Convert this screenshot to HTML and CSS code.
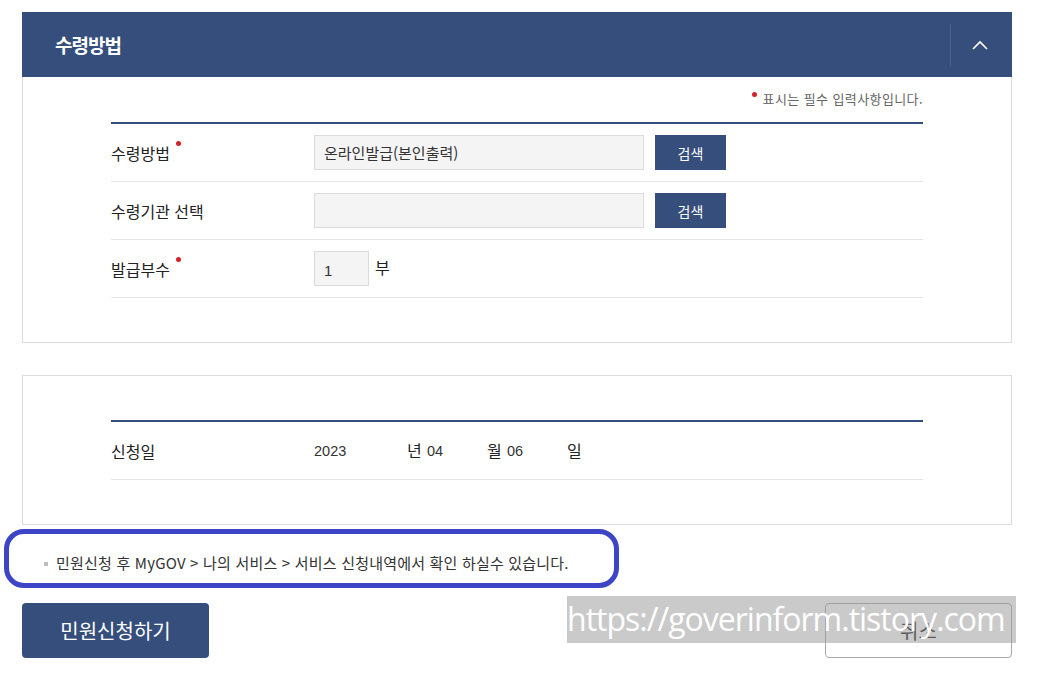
FILE: index.html
```html
<!DOCTYPE html>
<html lang="ko">
<head>
    <meta charset="UTF-8">
    <meta name="viewport" content="width=device-width, initial-scale=1.0">
    <title>민원신청 - 수령방법</title>
    <link rel="stylesheet" href="styles.css">
</head>
<body>
    <div class="page">
        <div class="panel">
            <div class="panel-head">
                <h2>수령방법</h2>
                <button class="toggle" type="button" aria-label="접기">
                    <svg width="16" height="10" viewBox="0 0 16 10"><polyline points="1,9 8,2 15,9" fill="none" stroke="#fff" stroke-width="1.6"/></svg>
                </button>
            </div>
            <div class="panel-body">
                <p class="req-note"><span class="req"></span>표시는 필수 입력사항입니다.</p>
                <div class="form-table">
                    <div class="form-row">
                        <div class="label">수령방법<span class="req"></span></div>
                        <div class="field">
                            <input class="input" type="text" value="온라인발급(본인출력)" readonly>
                            <button class="btn-search" type="button">검색</button>
                        </div>
                    </div>
                    <div class="form-row">
                        <div class="label">수령기관 선택</div>
                        <div class="field">
                            <input class="input" type="text" value="" readonly>
                            <button class="btn-search" type="button">검색</button>
                        </div>
                    </div>
                    <div class="form-row">
                        <div class="label">발급부수<span class="req"></span></div>
                        <div class="field">
                            <input class="input input-small" type="text" value="1">
                            <span class="unit">부</span>
                        </div>
                    </div>
                </div>
            </div>
        </div>

        <div class="panel panel-date">
            <div class="panel-body">
                <div class="form-table">
                    <div class="form-row">
                        <div class="label">신청일</div>
                        <div class="field date">
                            <span class="num year">2023</span><span class="unit-d">년</span>
                            <span class="num">04</span><span class="unit-d">월</span>
                            <span class="num">06</span><span class="unit-d">일</span>
                        </div>
                    </div>
                </div>
            </div>
        </div>

        <div class="notice">
            <p><span class="bullet"></span>민원신청 후 MyGOV &gt; 나의 서비스 &gt; 서비스 신청내역에서 확인 하실수 있습니다.</p>
        </div>

        <div class="actions">
            <button class="btn-primary" type="button">민원신청하기</button>
            <button class="btn-cancel" type="button">취소</button>
        </div>

        <div class="watermark">https://goverinform.tistory.com</div>
    </div>
</body>
</html>
```

FILE: styles.css
```css
* {
    margin: 0;
    padding: 0;
    box-sizing: border-box;
}

body {
    font-family: "Noto Sans CJK KR", "Noto Sans", sans-serif;
    background: #fff;
    color: #222;
}

.page {
    position: relative;
    width: 990px;
    margin: 12px 0 0 22px;
}

.panel {
    border: 1px solid #dcdcdc;
    border-top: none;
}

.panel-head {
    display: flex;
    align-items: center;
    justify-content: space-between;
    height: 65px;
    margin: 0 -1px;
    background: #354e7b;
    padding-left: 33px;
}

.panel-head h2 {
    color: #fff;
    font-size: 19px;
    font-weight: 700;
    line-height: 24px;
    letter-spacing: -1px;
}

.toggle {
    display: flex;
    align-items: center;
    justify-content: center;
    width: 62px;
    height: 42px;
    background: none;
    border: none;
    border-left: 1px solid #4b6390;
    padding-right: 3px;
}

.panel-body {
    padding: 12px 88px 44px;
}

.req-note {
    text-align: right;
    font-size: 13px;
    line-height: 20px;
    color: #666;
    letter-spacing: 0.4px;
    margin-bottom: 13px;
}

/* 필수 표시 점 */
.req {
    position: relative;
    top: -12px;
    display: inline-block;
    width: 5px;
    height: 5px;
    border-radius: 50%;
    background: #d8202a;
    vertical-align: middle;
    margin: 0 0 0 6px;
}

.req-note .req {
    top: -6px;
    margin: 0 6px 0 0;
}

.form-table {
    border-top: 2px solid #354e7b;
}

.form-row {
    display: flex;
    align-items: center;
    height: 58px;
    border-bottom: 1px solid #e6e6e6;
}

.label {
    width: 203px;
    font-size: 16px;
    line-height: 24px;
    color: #222;
}

.field {
    display: flex;
    align-items: center;
}

.input {
    width: 330px;
    height: 35px;
    background: #f4f4f4;
    border: 1px solid #dcdcdc;
    padding: 0 9px;
    font-family: "Noto Sans CJK KR", sans-serif;
    font-size: 15px;
    color: #333;
}

.input-small {
    width: 55px;
    font-family: "Liberation Sans", Arial, sans-serif;
    padding-top: 3px;
}

.btn-search {
    width: 71px;
    height: 35px;
    margin-left: 11px;
    background: #354e7b;
    color: #fff;
    border: none;
    font-family: "Noto Sans CJK KR", sans-serif;
    font-size: 14px;
}

.unit {
    margin-left: 6px;
    font-size: 16px;
    margin-top: -3px;
}

.panel-date {
    margin-top: 32px;
    border-top: 1px solid #dcdcdc;
}

.panel-date .panel-body {
    padding: 44px 88px 44px;
}

.date .num {
    font-family: "Liberation Sans", Arial, sans-serif;
    font-size: 14.5px;
    color: #333;
    width: 60px;
}

.date .year {
    width: 93px;
}

.date .unit-d {
    font-size: 16px;
    width: 20px;
    margin-top: -2px;
}

.notice {
    width: 615px;
    margin: 4px 0 0 -18px;
    border: 5px solid #3d44c6;
    border-radius: 20px;
    padding: 18px 0 9px 35px;
}

.notice p {
    font-size: 15px;
    line-height: 22px;
    color: #333;
    letter-spacing: 0.2px;
}

.bullet {
    display: inline-block;
    width: 4px;
    height: 4px;
    background: #bdbdbd;
    vertical-align: middle;
    margin: -2px 8px 0 0;
}

.actions {
    display: flex;
    justify-content: space-between;
    margin-top: 15px;
}

.btn-primary,
.btn-cancel {
    width: 187px;
    height: 55px;
    border-radius: 4px;
    font-family: "Noto Sans CJK KR", sans-serif;
    font-size: 20px;
}

.btn-primary {
    background: #354e7b;
    color: #fff;
    border: none;
}

.btn-cancel {
    background: #fff;
    color: #222;
    border: 1px solid #a9a9a9;
}

.watermark {
    position: absolute;
    left: 545px;
    top: 584px;
    width: 449px;
    height: 47px;
    background: rgba(150, 150, 150, 0.5);
    color: #fff;
    font-family: "Open Sans", sans-serif;
    font-size: 32px;
    line-height: 46px;
    letter-spacing: -1px;
    white-space: nowrap;
    overflow: hidden;
}
```
